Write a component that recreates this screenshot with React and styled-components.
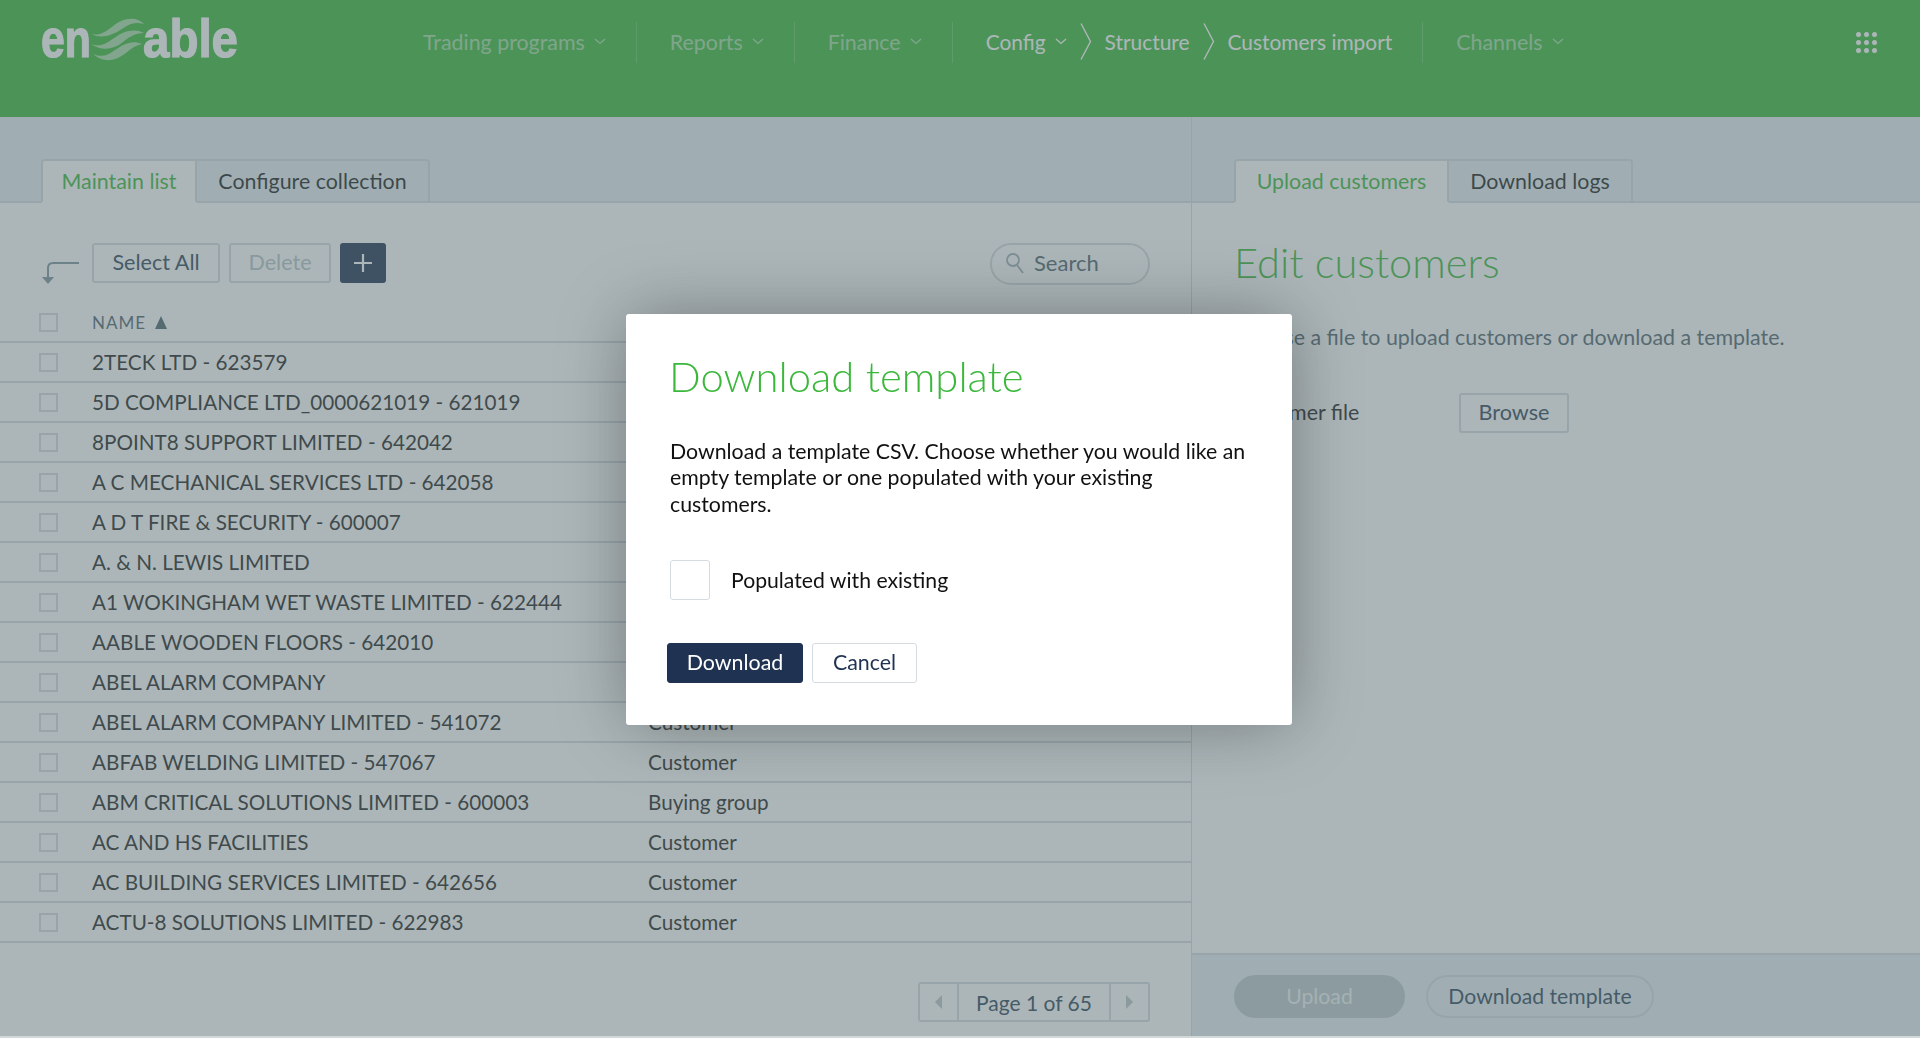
import React from "react";
import styled, { createGlobalStyle } from "styled-components";

const GlobalStyle = createGlobalStyle`
  html, body, #root {
    margin: 0;
    height: 100%;
  }
  body {
    font-family: "Lato", "Liberation Sans", sans-serif;
    font-size: 20px;
    color: #222;
    background: #d2d7d7;
    overflow: hidden;
  }
  * {
    box-sizing: border-box;
  }
`;

const GREEN = "#3bb83b";
const NAVY = "#1f3251";
const LINE = "#d4dce2";
const STRIP = "#e6eff5";

const Page = styled.div`
  display: flex;
  flex-direction: column;
  height: 1036px;
  background: #fff;
`;

const Header = styled.header`
  display: flex;
  align-items: flex-start;
  flex: none;
  height: 117px;
  background: ${GREEN};
  padding: 18px 43px 0 41px;
`;

const Logo = styled.svg`
  flex: none;
  width: 198px;
  height: 42px;
  margin-right: 184px;
  overflow: visible;
`;

const Nav = styled.nav`
  display: flex;
  align-items: center;
  flex: 1;
  height: 41px;
  margin-top: 3px;
`;

const NavItem = styled.a`
  display: flex;
  align-items: center;
  gap: 9px;
  height: 41px;
  color: rgba(255, 255, 255, 0.55);
  font-size: 21.4px;
  white-space: nowrap;
`;

const NavDivider = styled.span`
  flex: none;
  width: 1px;
  height: 41px;
  margin: 1px 33px 0 30px;
  background: rgba(255, 255, 255, 0.2);
`;

const Crumb = styled.a`
  display: flex;
  align-items: center;
  gap: 9px;
  color: #fff;
  font-size: 20.9px;
  white-space: nowrap;
`;

const CrumbArrow = styled.svg`
  flex: none;
  width: 12px;
  height: 37px;
  margin: 0 13px;
`;

const AppsGrid = styled.div`
  display: grid;
  grid-template-columns: repeat(3, 5px);
  gap: 3px;
  margin-top: 14px;
  & > i {
    width: 5px;
    height: 5px;
    border-radius: 50%;
    background: #fff;
  }
`;

const Main = styled.main`
  display: flex;
  flex: 1;
  min-height: 0;
`;

const LeftPanel = styled.section`
  display: flex;
  flex-direction: column;
  flex: none;
  width: 1192px;
  border-right: 1px solid ${LINE};
`;

const RightPanel = styled.section`
  display: flex;
  flex-direction: column;
  flex: 1;
  min-width: 0;
`;

const TabStrip = styled.div`
  display: flex;
  align-items: flex-end;
  flex: none;
  height: 86px;
  padding-left: ${(p) => p.$inset}px;
  background: ${STRIP};
  border-bottom: 2px solid ${LINE};
`;

const Tab = styled.a`
  display: flex;
  align-items: center;
  justify-content: center;
  width: ${(p) => p.$width}px;
  height: 44px;
  margin-bottom: -2px;
  border: 2px solid ${LINE};
  border-left-width: ${(p) => (p.$active ? 2 : 0)}px;
  border-bottom-color: ${(p) => (p.$active ? "#fff" : LINE)};
  border-radius: ${(p) => (p.$active ? "4px 0 0 0" : "0 4px 0 0")};
  background: ${(p) => (p.$active ? "#fff" : "transparent")};
  color: ${(p) => (p.$active ? GREEN : "#1c1c1c")};
  font-size: 21.4px;
  white-space: nowrap;
`;

const Toolbar = styled.div`
  display: flex;
  align-items: flex-start;
  flex: none;
  height: 80px;
  padding: 40px 41px 0 41px;
`;

const BackArrow = styled.svg`
  flex: none;
  width: 39px;
  height: 24px;
  margin: 19px 12px 0 0;
`;

const Button = styled.button`
  height: 40px;
  width: ${(p) => p.$width}px;
  margin-right: ${(p) => p.$gap || 0}px;
  padding: 0 0 2px;
  border: 2px solid ${LINE};
  border-radius: 3px;
  background: #fff;
  color: ${(p) => (p.$disabled ? "#b6c3c9" : "#2d4459")};
  font: inherit;
  font-size: 21.6px;
`;

const PlusButton = styled.button`
  display: flex;
  align-items: center;
  justify-content: center;
  width: 46px;
  height: 40px;
  padding: 0;
  border: none;
  border-radius: 3px;
  background: ${NAVY};
`;

const SearchBox = styled.div`
  display: flex;
  align-items: center;
  gap: 9px;
  width: 160px;
  height: 42px;
  margin-left: auto;
  padding: 0 0 3px 13px;
  border: 2px solid ${LINE};
  border-radius: 21px;
  color: #4f6470;
  font-size: 22px;
`;

const Table = styled.div`
  flex: none;
`;

const Row = styled.div`
  display: flex;
  align-items: center;
  height: ${(p) => (p.$head ? 60 : 40)}px;
  padding-left: 39px;
  padding-top: ${(p) => (p.$head ? 20 : 0)}px;
  border-bottom: 2px solid ${LINE};
  font-size: 20.7px;
  color: #222;
`;

const Check = styled.span`
  flex: none;
  width: 19px;
  height: 19px;
  margin-right: 34px;
  border: 2px solid ${LINE};
`;

const NameCell = styled.span`
  flex: none;
  width: 556px;
  white-space: nowrap;
`;

const HeadCell = styled.span`
  display: flex;
  align-items: center;
  gap: 9px;
  color: #4f6470;
  font-size: 17px;
  letter-spacing: 1px;
  &::after {
    content: "";
    border-left: 6px solid transparent;
    border-right: 6px solid transparent;
    border-bottom: 13px solid #4f6470;
  }
`;

const Pager = styled.div`
  display: flex;
  align-self: flex-end;
  height: 40px;
  margin: 39px 41px 0 0;
  border: 2px solid ${LINE};
  border-radius: 3px;
  color: #2d4459;
`;

const PagerArrow = styled.span`
  display: flex;
  align-items: center;
  justify-content: center;
  width: 37px;
  &::after {
    content: "";
    border-top: 7px solid transparent;
    border-bottom: 7px solid transparent;
    border-${(p) => (p.$next ? "left" : "right")}: 7px solid #b9c6cb;
  }
`;

const PagerLabel = styled.span`
  display: flex;
  align-items: center;
  justify-content: center;
  width: 154px;
  border-left: 2px solid ${LINE};
  border-right: 2px solid ${LINE};
  font-size: 21px;
`;

const EditBody = styled.div`
  flex: 1;
  padding: 34px 0 0 42px;
`;

const EditTitle = styled.h1`
  margin: 0;
  color: ${GREEN};
  font-size: 41.6px;
  font-weight: 300;
  line-height: 50px;
`;

const EditText = styled.p`
  margin: 37px 0 0;
  color: #4f6470;
  font-size: 21.4px;
  line-height: 26px;
`;

const FileRow = styled.div`
  display: flex;
  align-items: center;
  margin-top: 43px;
`;

const FileLabel = styled.span`
  flex: none;
  width: 225px;
  padding-bottom: 2px;
  color: #222;
  font-size: 21.4px;
`;

const BottomBar = styled.div`
  display: flex;
  align-items: center;
  gap: 21px;
  flex: none;
  height: 83px;
  padding: 2px 0 0 42px;
  background: ${STRIP};
  border-top: 2px solid ${LINE};
`;

const PillButton = styled.button`
  width: ${(p) => p.$width}px;
  height: 43px;
  padding: 0 0 2px;
  border: 2px solid ${(p) => (p.$disabled ? "#bbc8cc" : LINE)};
  border-radius: 22px;
  background: ${(p) => (p.$disabled ? "#bbc8cc" : "transparent")};
  color: ${(p) => (p.$disabled ? "#f0f4f5" : "#2d4459")};
  font: inherit;
  font-size: 21.2px;
`;

const Overlay = styled.div`
  position: fixed;
  inset: 0 0 2px 0;
  display: flex;
  align-items: center;
  justify-content: center;
  padding: 2px 2px 0 0;
  background: rgba(94, 113, 117, 0.515);
  overflow: hidden;
`;

const Modal = styled.div`
  width: 666px;
  height: 411px;
  padding: 37px 42px 0 44px;
  border-radius: 3px;
  background: #fff;
  box-shadow: 0 0 70px rgba(0, 0, 0, 0.32);
  color: #111;
`;

const ModalTitle = styled.h2`
  margin: 0 0 0 -1px;
  color: ${GREEN};
  font-size: 41.8px;
  font-weight: 300;
  line-height: 50px;
`;

const ModalText = styled.p`
  width: 585px;
  margin: 37px 0 0;
  font-size: 21.3px;
  line-height: 26.9px;
`;

const CheckRow = styled.label`
  display: flex;
  align-items: center;
  gap: 21px;
  margin-top: 42px;
  font-size: 21.2px;
`;

const BigCheck = styled.span`
  flex: none;
  width: 40px;
  height: 40px;
  border: 1px solid ${LINE};
  border-radius: 3px;
`;

const ModalActions = styled.div`
  display: flex;
  gap: 9px;
  margin: 43px 0 0 -3px;
`;

const ModalButton = styled.button`
  width: ${(p) => p.$width}px;
  height: 40px;
  padding: 0 0 2px;
  border: 1px solid ${(p) => (p.$primary ? NAVY : LINE)};
  border-radius: 3px;
  background: ${(p) => (p.$primary ? NAVY : "#fff")};
  color: ${(p) => (p.$primary ? "#fff" : NAVY)};
  font: inherit;
  font-size: 21.4px;
`;

const Chevron = () => (
  <svg width="12" height="7" viewBox="0 0 12 7" fill="none" stroke="currentColor" strokeWidth="1.3">
    <path d="M1 1l5 4.5L11 1" />
  </svg>
);

const BigArrow = () => (
  <CrumbArrow viewBox="0 0 12 37" fill="none" stroke="#fff" strokeWidth="1.4">
    <path d="M1 0.5L10.5 18.5L1 36.5" />
  </CrumbArrow>
);

const EnableLogo = () => (
  <Logo viewBox="0 0 198 42">
    <g fill="#fff" stroke="#fff" strokeWidth="1.2" fontFamily="Liberation Sans" fontWeight="700" fontSize="54">
      <text x="0" y="39" textLength="50" lengthAdjust="spacingAndGlyphs">en</text>
      <text x="102" y="39" textLength="95" lengthAdjust="spacingAndGlyphs">able</text>
    </g>
    <g fill="#fff" opacity="0.55">
      <path d="M50 16C66 20 72 2 88 1C94 0 99 2 103 6C96 4 90 5 84 9C74 16 62 22 50 16Z" />
      <path d="M50 26C66 32 72 16 88 13C93 12 98 12 103 15C94 15 88 19 82 24C72 32 60 33 50 26Z" />
      <path d="M52 36C68 43 74 28 88 25C92 24 96 24 101 26C92 28 88 33 82 37C74 43 62 45 52 36Z" />
    </g>
  </Logo>
);

const rows = [
  ["2TECK LTD - 623579", "Customer"],
  ["5D COMPLIANCE LTD_0000621019 - 621019", "Customer"],
  ["8POINT8 SUPPORT LIMITED - 642042", "Customer"],
  ["A C MECHANICAL SERVICES LTD - 642058", "Customer"],
  ["A D T FIRE & SECURITY - 600007", "Customer"],
  ["A. & N. LEWIS LIMITED", "Customer"],
  ["A1 WOKINGHAM WET WASTE LIMITED - 622444", "Customer"],
  ["AABLE WOODEN FLOORS - 642010", "Customer"],
  ["ABEL ALARM COMPANY", "Customer"],
  ["ABEL ALARM COMPANY LIMITED - 541072", "Customer"],
  ["ABFAB WELDING LIMITED - 547067", "Customer"],
  ["ABM CRITICAL SOLUTIONS LIMITED - 600003", "Buying group"],
  ["AC AND HS FACILITIES", "Customer"],
  ["AC BUILDING SERVICES LIMITED - 642656", "Customer"],
  ["ACTU-8 SOLUTIONS LIMITED - 622983", "Customer"],
];

export default function App() {
  return (
    <>
      <GlobalStyle />
      <Page>
        <Header>
          <EnableLogo />
          <Nav>
            <NavItem>Trading programs <Chevron /></NavItem>
            <NavDivider />
            <NavItem>Reports <Chevron /></NavItem>
            <NavDivider />
            <NavItem>Finance <Chevron /></NavItem>
            <NavDivider />
            <Crumb>Config <Chevron /></Crumb>
            <BigArrow />
            <Crumb>Structure</Crumb>
            <BigArrow />
            <Crumb>Customers import</Crumb>
            <NavDivider />
            <NavItem>Channels <Chevron /></NavItem>
          </Nav>
          <AppsGrid>
            {Array.from({ length: 9 }).map((_, i) => <i key={i} />)}
          </AppsGrid>
        </Header>
        <Main>
          <LeftPanel>
            <TabStrip $inset={41}>
              <Tab $active $width={156}>Maintain list</Tab>
              <Tab $width={233}>Configure collection</Tab>
            </TabStrip>
            <Toolbar>
              <BackArrow viewBox="0 0 39 24" fill="none">
                <path d="M38 1H12C9 1 7 3 7 6V16" stroke="#7d929c" strokeWidth="2" />
                <path d="M1 15H13L7 22Z" fill="#7d929c" />
              </BackArrow>
              <Button $width={128} $gap={9}>Select All</Button>
              <Button $width={102} $gap={9} $disabled>Delete</Button>
              <PlusButton>
                <svg width="20" height="20" viewBox="0 0 20 20" stroke="#fff" strokeWidth="2.2">
                  <path d="M10 1v18M1 10h18" />
                </svg>
              </PlusButton>
              <SearchBox>
                <svg width="20" height="22" viewBox="0 0 20 22" fill="none" stroke="#9fb0b8" strokeWidth="1.8">
                  <circle cx="8" cy="8" r="6" />
                  <path d="M12 13l6 8" />
                </svg>
                Search
              </SearchBox>
            </Toolbar>
            <Table>
              <Row $head>
                <Check />
                <HeadCell>NAME</HeadCell>
              </Row>
              {rows.map(([name, type]) => (
                <Row key={name}>
                  <Check />
                  <NameCell>{name}</NameCell>
                  <span>{type}</span>
                </Row>
              ))}
            </Table>
            <Pager>
              <PagerArrow />
              <PagerLabel>Page 1 of 65</PagerLabel>
              <PagerArrow $next />
            </Pager>
          </LeftPanel>
          <RightPanel>
            <TabStrip $inset={42}>
              <Tab $active $width={215}>Upload customers</Tab>
              <Tab $width={184}>Download logs</Tab>
            </TabStrip>
            <EditBody>
              <EditTitle>Edit customers</EditTitle>
              <EditText>Choose a file to upload customers or download a template.</EditText>
              <FileRow>
                <FileLabel>Customer file</FileLabel>
                <Button $width={110}>Browse</Button>
              </FileRow>
            </EditBody>
            <BottomBar>
              <PillButton $width={171} $disabled>Upload</PillButton>
              <PillButton $width={228}>Download template</PillButton>
            </BottomBar>
          </RightPanel>
        </Main>
      </Page>
      <Overlay>
        <Modal>
          <ModalTitle>Download template</ModalTitle>
          <ModalText>
            Download a template CSV. Choose whether you would like an empty template or one populated with your existing customers.
          </ModalText>
          <CheckRow>
            <BigCheck />
            Populated with existing
          </CheckRow>
          <ModalActions>
            <ModalButton $primary $width={136}>Download</ModalButton>
            <ModalButton $width={105}>Cancel</ModalButton>
          </ModalActions>
        </Modal>
      </Overlay>
    </>
  );
}
